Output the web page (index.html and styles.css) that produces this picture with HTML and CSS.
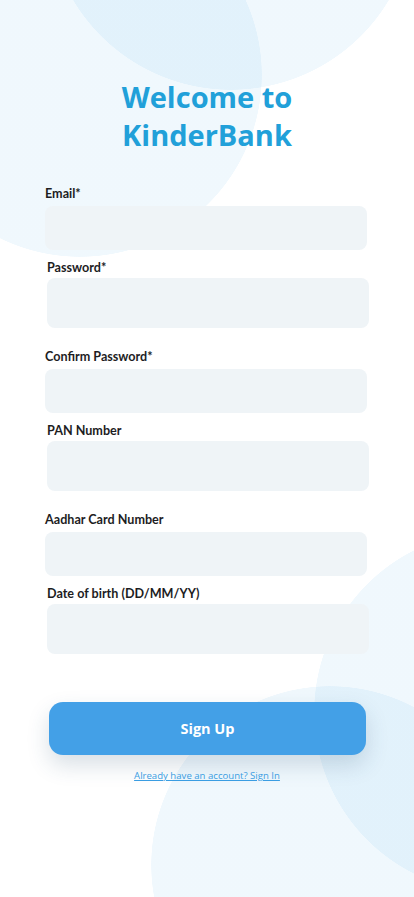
FILE: index.html
```html
<!DOCTYPE html>
<html lang="en">
<head>
<meta charset="utf-8">
<title>KinderBank - Sign Up</title>
<link rel="stylesheet" href="styles.css">
</head>
<body>
<main class="page">
  <h1 class="title">Welcome to<br>KinderBank</h1>
  <form class="form">
    <div class="field field-a field-first">
      <label class="label">Email*</label>
      <input class="input" type="email">
    </div>
    <div class="field field-b">
      <label class="label">Password*</label>
      <input class="input" type="password">
    </div>
    <div class="field field-a">
      <label class="label">Confirm Password*</label>
      <input class="input" type="password">
    </div>
    <div class="field field-b">
      <label class="label">PAN Number</label>
      <input class="input" type="text">
    </div>
    <div class="field field-a">
      <label class="label">Aadhar Card Number</label>
      <input class="input" type="text">
    </div>
    <div class="field field-b">
      <label class="label">Date of birth (DD/MM/YY)</label>
      <input class="input" type="text">
    </div>
    <button class="btn" type="button">Sign Up</button>
  </form>
  <a class="link" href="#">Already have an account? Sign In</a>
</main>
</body>
</html>
```
FILE: styles.css
```css
html, body {
  margin: 0;
  padding: 0;
}
body {
  width: 414px;
  min-height: 897px;
  font-family: "Open Sans", "Noto Sans", sans-serif;
  background-color: #ffffff;
  background-image:
    radial-gradient(circle 182px at 80px 75px, rgba(0, 138, 222, 0.06) 181.5px, rgba(0, 138, 222, 0) 182px),
    radial-gradient(circle 184px at 231px -94px, rgba(0, 138, 222, 0.06) 183.5px, rgba(0, 138, 222, 0) 184px),
    radial-gradient(circle 181px at 495px 712px, rgba(0, 138, 222, 0.06) 180.5px, rgba(0, 138, 222, 0) 181px),
    radial-gradient(circle 179px at 330px 865px, rgba(0, 138, 222, 0.06) 178.5px, rgba(0, 138, 222, 0) 179px);
  background-repeat: no-repeat;
  overflow: hidden;
}
.page {
  display: flex;
  flex-direction: column;
  align-items: center;
  padding-top: 78px;
}
.title {
  margin: 0;
  font-size: 29px;
  line-height: 38px;
  font-weight: 700;
  color: #21a0d9;
  text-align: center;
}
.form {
  width: 414px;
  display: flex;
  flex-direction: column;
  margin-top: 32px;
}
.field {
  display: flex;
  flex-direction: column;
  width: 322px;
}
.field-a {
  margin-left: 45px;
  margin-top: 21px;
  gap: 4px;
}
.field-a .input {
  height: 44px;
}
.field-b {
  margin-left: 47px;
  margin-top: 10px;
  gap: 2px;
}
.field-b .input {
  height: 50px;
}
.field-first {
  margin-top: 0;
}
.label {
  font-family: "Lato", "Open Sans", sans-serif;
  font-size: 12.6px;
  line-height: 16px;
  font-weight: 700;
  color: #1d1d1f;
}
.input {
  box-sizing: border-box;
  width: 322px;
  border: none;
  border-radius: 8px;
  background: #eff4f7;
  padding: 0 12px;
  font-family: inherit;
  outline: none;
}
.btn {
  margin: 48px 0 0 49px;
  width: 317px;
  height: 53px;
  border: none;
  border-radius: 14px;
  background: #43a0e7;
  color: #ffffff;
  font-family: inherit;
  font-size: 14.5px;
  font-weight: 700;
  box-shadow: 0 10px 22px rgba(40, 80, 110, 0.18);
  cursor: pointer;
}
.link {
  margin-top: 14px;
  font-size: 9.6px;
  line-height: 14px;
  color: #3a9de2;
  text-decoration: underline;
}
```
